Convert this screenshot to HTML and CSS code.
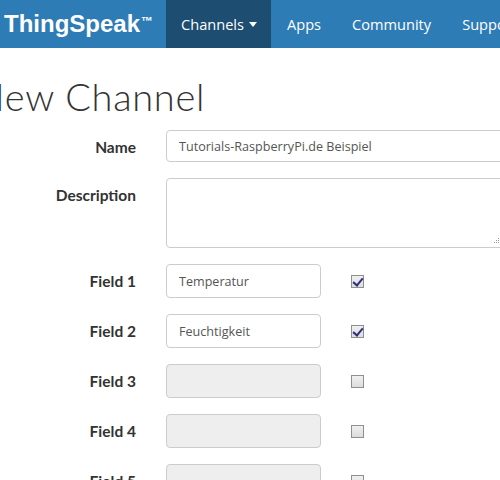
FILE: index.html
```html
<!DOCTYPE html>
<html lang="de">

<head>
    <meta charset="UTF-8">
    <title>New Channel - ThingSpeak</title>
    <link rel="stylesheet" href="styles.css">
</head>

<body>
    <nav class="navbar">
        <a class="brand" href="#">ThingSpeak<sup>™</sup></a>
        <ul class="nav">
            <li class="active"><a href="#">Channels <span class="caret"></span></a></li>
            <li><a href="#">Apps</a></li>
            <li><a href="#">Community</a></li>
            <li><a href="#">Support</a></li>
        </ul>
    </nav>

    <div class="page">
        <h1>New Channel</h1>
        <form class="channel-form" autocomplete="off">
            <div class="row">
                <label>Name</label>
                <input type="text" class="wide" value="Tutorials-RaspberryPi.de Beispiel">
            </div>
            <div class="row">
                <label>Description</label>
                <div class="area">
                    <svg class="grip" width="6" height="6" viewBox="0 0 6 6"><rect x="4" y="0" width="1" height="1" fill="#999"/><rect x="2" y="2" width="1" height="1" fill="#999"/><rect x="4" y="2" width="1" height="1" fill="#999"/><rect x="0" y="4" width="1" height="1" fill="#999"/><rect x="2" y="4" width="1" height="1" fill="#999"/><rect x="4" y="4" width="1" height="1" fill="#999"/></svg>
                </div>
            </div>
            <div class="row">
                <label>Field 1</label>
                <input type="text" class="field" value="Temperatur">
                <span class="check on"></span>
            </div>
            <div class="row">
                <label>Field 2</label>
                <input type="text" class="field" value="Feuchtigkeit">
                <span class="check on"></span>
            </div>
            <div class="row">
                <label>Field 3</label>
                <input type="text" class="field" disabled>
                <span class="check"></span>
            </div>
            <div class="row">
                <label>Field 4</label>
                <input type="text" class="field" disabled>
                <span class="check"></span>
            </div>
            <div class="row">
                <label>Field 5</label>
                <input type="text" class="field" disabled>
                <span class="check"></span>
            </div>
        </form>
    </div>
</body>

</html>
```

FILE: styles.css
```css
* {
    margin: 0;
    padding: 0;
    box-sizing: border-box;
    list-style: none;
    text-decoration: none;
}

body {
    width: 500px;
    height: 480px;
    overflow: hidden;
    background: #fff;
    font-family: "Open Sans", "Noto Sans", sans-serif;
}

.navbar {
    display: flex;
    height: 48px;
    background: #2e7cb6;
    white-space: nowrap;
    overflow: hidden;
}

.brand {
    display: flex;
    align-items: center;
    flex-shrink: 0;
    width: 166px;
    padding-left: 4px;
    color: #fff;
    font-family: "Liberation Sans", Arial, sans-serif;
    font-weight: 700;
    font-size: 24px;
}

.brand sup {
    font-size: 12px;
    margin-left: 1px;
    position: relative;
    top: -3px;
}

.nav {
    display: flex;
    flex-shrink: 0;
}

.nav a {
    display: flex;
    align-items: center;
    height: 48px;
    padding: 0 15px 0 16px;
    color: #fff;
    font-size: 14.6px;
}

.nav .active a {
    background: #1d4d71;
    padding: 0 14px 0 15px;
}

.caret {
    display: inline-block;
    margin-left: 5px;
    border-top: 5px solid #fff;
    border-left: 4px solid transparent;
    border-right: 4px solid transparent;
}

.page {
    margin-left: -24px;
}

h1 {
    font-family: "Lato", sans-serif;
    font-weight: 300;
    font-size: 38px;
    color: #333;
    letter-spacing: 0.7px;
    line-height: 37px;
    height: 37px;
    margin-top: 30px;
}

.channel-form {
    display: flex;
    flex-direction: column;
    gap: 16px;
    margin-top: 15px;
}

.row {
    display: flex;
    align-items: flex-start;
}

.row label {
    flex-shrink: 0;
    width: 160px;
    text-align: right;
    margin-right: 30px;
    padding-top: 8px;
    font-family: "Lato", sans-serif;
    font-weight: 700;
    font-size: 15.5px;
    color: #333;
}

input {
    flex-shrink: 0;
    height: 34px;
    border: 1px solid #ccc;
    border-radius: 4px;
    padding: 0 12px;
    font-family: "Open Sans", "Noto Sans", sans-serif;
    font-size: 12.6px;
    color: #555;
    outline: none;
}

.wide {
    width: 360px;
    height: 32px;
}

.area {
    position: relative;
    flex-shrink: 0;
    width: 360px;
    height: 70px;
    border: 1px solid #ccc;
    border-radius: 4px;
}

.grip {
    position: absolute;
    left: 327px;
    bottom: 3px;
}

.field {
    width: 155px;
}

.field:disabled {
    background: #eee;
}

.check {
    flex-shrink: 0;
    width: 13px;
    height: 13px;
    margin: 11px 0 0 30px;
    border: 1px solid #8e8f8f;
    background: linear-gradient(#f0f0f0, #dcdcdc);
    position: relative;
}

.check.on::after {
    content: "";
    position: absolute;
    left: 3px;
    top: 0;
    width: 4px;
    height: 8px;
    border-right: 2px solid #2d2f7a;
    border-bottom: 2px solid #2d2f7a;
    transform: rotate(40deg);
}
```
